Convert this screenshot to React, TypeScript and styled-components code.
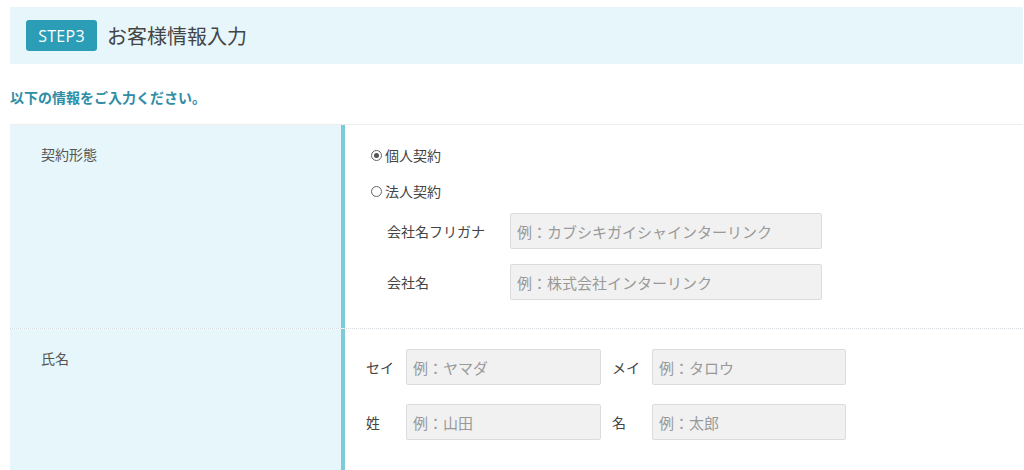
import React from 'react';
import styled, { createGlobalStyle } from 'styled-components';

const GlobalStyle = createGlobalStyle`
  html, body {
    margin: 0;
    background: #fff;
    font-family: "Noto Sans CJK JP", "Noto Sans", sans-serif;
    color: #444;
  }
`;

const Page = styled.div`
  padding: 7px 1px 0 10px;
`;

const StepHeader = styled.div`
  display: flex;
  align-items: center;
  gap: 10px;
  height: 57px;
  padding-left: 16px;
  background: #e6f6fa;
`;

const StepBadge = styled.span`
  display: inline-flex;
  align-items: center;
  justify-content: center;
  width: 71px;
  height: 31px;
  border-radius: 3px;
  background: #2b9db6;
  color: #fff;
  font-family: "Open Sans", "Noto Sans", sans-serif;
  font-size: 16px;
  letter-spacing: 0.3px;
`;

const StepTitle = styled.h1`
  margin: 0;
  font-size: 20px;
  font-weight: 400;
  color: #444;
`;

const Lead = styled.p`
  margin: 23px 0 17px;
  font-size: 14px;
  font-weight: 700;
  color: #2f8ea6;
  line-height: 20px;
`;

const Table = styled.div`
  border-top: 1px solid #eeeeee;
`;

const Row = styled.div<{ $height: number }>`
  display: grid;
  grid-template-columns: 335px 1fr;
  height: ${p => p.$height}px;
  border-bottom: 1px dotted #d6dcdf;
`;

const Head = styled.div`
  background: #e6f6fa;
  border-right: 4px solid #7ecbd8;
  padding: 20px 0 0 31px;
  font-size: 14px;
  line-height: 18px;
  color: #555;
`;

const Cell = styled.div<{ $pl: number; $pt: number }>`
  padding: ${p => p.$pt}px 0 0 ${p => p.$pl}px;
  display: flex;
  flex-direction: column;
`;

const RadioLine = styled.label`
  display: flex;
  align-items: center;
  gap: 3px;
  height: 36px;
  font-size: 14px;
  color: #444;
`;

const RadioMark = styled.span<{ $on?: boolean }>`
  position: relative;
  width: 11px;
  height: 11px;
  border: 1px solid #666;
  border-radius: 50%;
  box-sizing: border-box;
  &::after {
    content: '';
    display: ${p => (p.$on ? 'block' : 'none')};
    position: absolute;
    inset: 2px;
    border-radius: 50%;
    background: #555;
  }
`;

const SubFields = styled.div`
  display: flex;
  flex-direction: column;
  gap: 15px;
  padding: 4px 0 0 16px;
`;

const FieldRow = styled.div`
  display: flex;
  align-items: center;
`;

const FieldLabel = styled.span<{ $w: number }>`
  width: ${p => p.$w}px;
  flex: none;
  font-size: 14px;
  color: #444;
`;

const TextInput = styled.input<{ $w: number }>`
  width: ${p => p.$w}px;
  height: 36px;
  box-sizing: border-box;
  border: 1px solid #dcdcdc;
  border-radius: 2px;
  background: #f1f1f1;
  padding: 0 6px;
  font-family: "Noto Sans CJK JP", "Noto Sans", sans-serif;
  font-size: 15px;
  color: #444;
  outline: none;
  &::placeholder {
    color: #999;
  }
`;

const NameGrid = styled.div`
  display: grid;
  grid-template-columns: 40px 195px 11px 40px 194px;
  row-gap: 19px;
  align-items: center;
`;

export default function App() {
  return (
    <>
      <GlobalStyle />
      <Page>
        <StepHeader>
          <StepBadge>STEP3</StepBadge>
          <StepTitle>お客様情報入力</StepTitle>
        </StepHeader>
        <Lead>以下の情報をご入力ください。</Lead>
        <Table>
          <Row $height={203}>
            <Head>契約形態</Head>
            <Cell $pl={26} $pt={12}>
              <RadioLine>
                <RadioMark $on />
                個人契約
              </RadioLine>
              <RadioLine>
                <RadioMark />
                法人契約
              </RadioLine>
              <SubFields>
                <FieldRow>
                  <FieldLabel $w={123}>会社名フリガナ</FieldLabel>
                  <TextInput $w={312} placeholder="例：カブシキガイシャインターリンク" />
                </FieldRow>
                <FieldRow>
                  <FieldLabel $w={123}>会社名</FieldLabel>
                  <TextInput $w={312} placeholder="例：株式会社インターリンク" />
                </FieldRow>
              </SubFields>
            </Cell>
          </Row>
          <Row $height={141}>
            <Head>氏名</Head>
            <Cell $pl={21} $pt={20}>
              <NameGrid>
                <FieldLabel $w={40}>セイ</FieldLabel>
                <TextInput $w={195} placeholder="例：ヤマダ" />
                <span />
                <FieldLabel $w={40}>メイ</FieldLabel>
                <TextInput $w={194} placeholder="例：タロウ" />
                <FieldLabel $w={40}>姓</FieldLabel>
                <TextInput $w={195} placeholder="例：山田" />
                <span />
                <FieldLabel $w={40}>名</FieldLabel>
                <TextInput $w={194} placeholder="例：太郎" />
              </NameGrid>
            </Cell>
          </Row>
        </Table>
      </Page>
    </>
  );
}
